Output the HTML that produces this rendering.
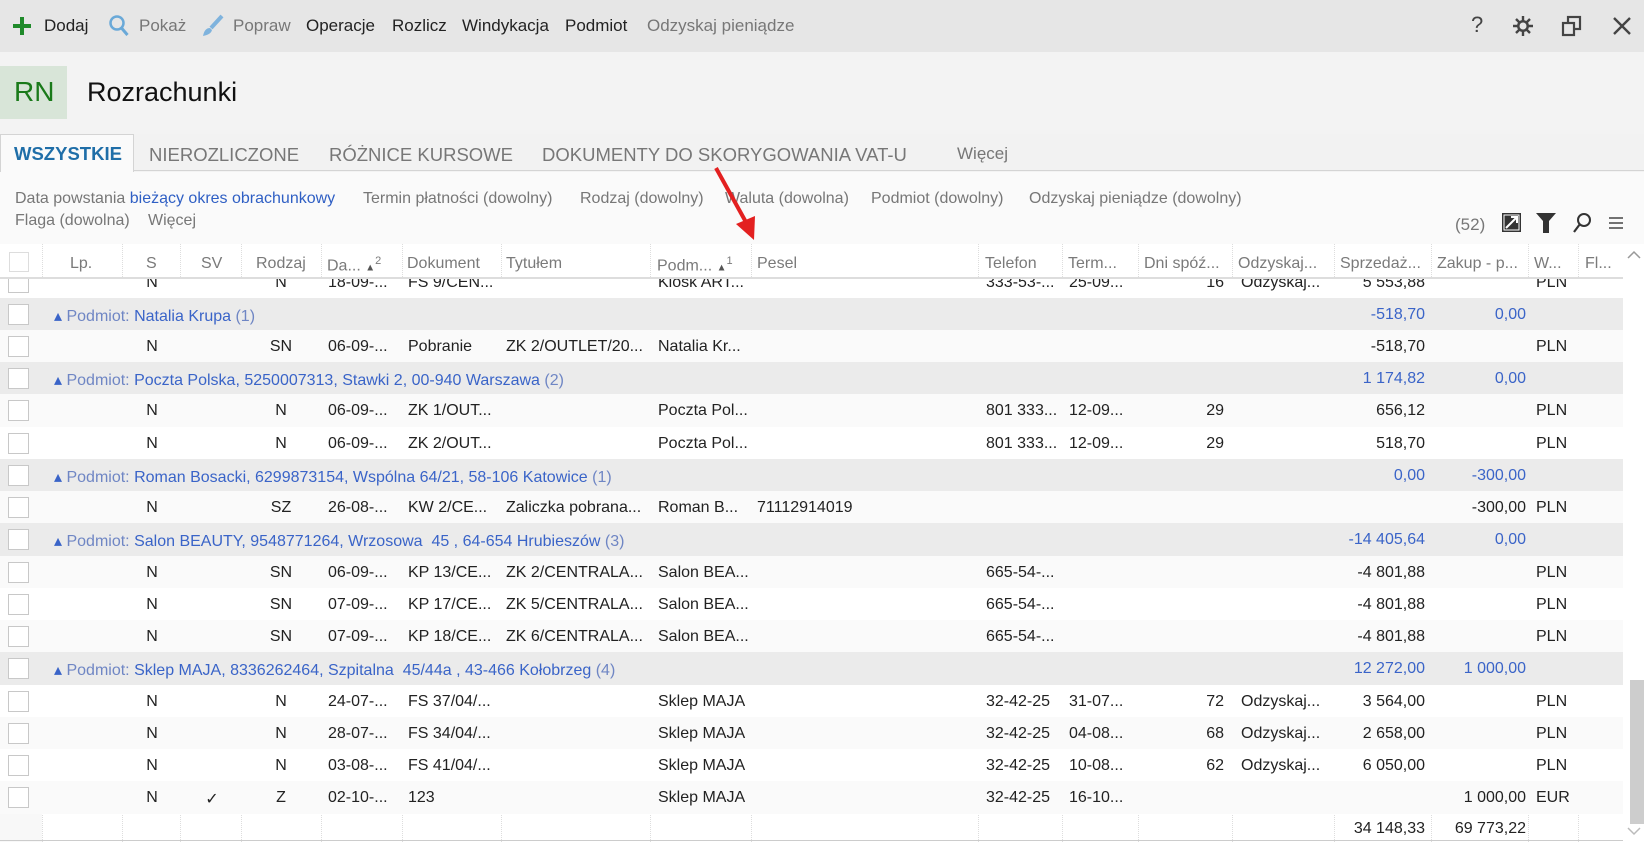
<!DOCTYPE html>
<html><head><meta charset="utf-8"><style>
*{margin:0;padding:0;box-sizing:border-box}
body{width:1644px;height:842px;overflow:hidden;background:#f3f3f3;font-family:"Liberation Sans",sans-serif;color:#222;position:relative}
.a{position:absolute;white-space:nowrap}
.tb{position:absolute;left:0;top:0;width:1644px;height:52px;background:#e6e6e6}
.tb .a{top:16px;font-size:17px}
.g{color:#777}
.row{position:absolute;left:0;width:1623px;height:33px;font-size:16px}
.row .a{top:8px}
.r{text-align:right}
.c{text-align:center}
.cb{position:absolute;left:8px;top:6px;width:21px;height:21px;border:1px solid #c8c8c8;background:#fff}
.grp{background:#ebebeb}
.grp .t{color:#3a64c8}
.sep{position:absolute;top:244px;height:598px;border-left:1px dotted #ddd}
.hd{position:absolute;top:255px;font-size:16px;color:#7a7a7a}
</style></head><body>
<div class="tb">
 <svg class="a" style="left:12px;top:16px" width="20" height="20"><path d="M10 1v18M1 10h18" stroke="#1f8a2a" stroke-width="4"/></svg>
 <div class="a" style="left:44px">Dodaj</div>
 <svg class="a" style="left:108px;top:14px" width="22" height="24"><circle cx="9" cy="9" r="6.5" fill="none" stroke="#6aa9d8" stroke-width="2.5"/><path d="M13.5 14l6 7" stroke="#6aa9d8" stroke-width="3"/></svg>
 <div class="a g" style="left:139px">Pokaż</div>
 <svg class="a" style="left:200px;top:14px" width="24" height="24"><path d="M22 2L11 14" stroke="#7fb3dd" stroke-width="4"/><path d="M10 14c-4 0-6 3-7 8 4-1 8-2 9-6z" fill="#7fb3dd"/></svg>
 <div class="a g" style="left:233px">Popraw</div>
 <div class="a" style="left:306px">Operacje</div>
 <div class="a" style="left:392px">Rozlicz</div>
 <div class="a" style="left:462px">Windykacja</div>
 <div class="a" style="left:565px">Podmiot</div>
 <div class="a g" style="left:647px">Odzyskaj pieniądze</div>
 <div class="a" style="left:1471px;top:12px;font-size:22px;color:#444">?</div>
 <svg class="a" style="left:1512px;top:15px" width="22" height="22" viewBox="0 0 22 22"><g stroke="#444" stroke-width="2.4"><path d="M11 1v20M1 11h20M4 4l14 14M18 4L4 18"/></g><circle cx="11" cy="11" r="6" fill="#444"/><circle cx="11" cy="11" r="3.5" fill="#e6e6e6"/></svg>
 <svg class="a" style="left:1561px;top:15px" width="22" height="22"><rect x="7" y="2" width="12" height="12" fill="none" stroke="#444" stroke-width="2.2"/><rect x="2" y="8" width="11" height="12" fill="#e6e6e6" stroke="#444" stroke-width="2.2"/></svg>
 <svg class="a" style="left:1612px;top:16px" width="20" height="20"><path d="M2 2l16 16M18 2L2 18" stroke="#444" stroke-width="2.4"/></svg>
</div>
<div class="a" style="left:0;top:66px;width:67px;height:53px;background:#d8e5d8"></div>
<div class="a" style="left:14px;top:76px;font-size:28px;color:#1a7a1a">RN</div>
<div class="a" style="left:87px;top:77px;font-size:27px;color:#111">Rozrachunki</div>
<div class="a" style="left:0;top:134px;width:1644px;height:37px;background:#f2f2f2;border-bottom:1px solid #d4d4d4"></div>
<div class="a" style="left:0;top:134px;width:134px;height:38px;background:#fafafa;border:1px solid #d4d4d4;border-bottom:none"></div>
<div class="a" style="left:14px;top:143px;font-size:18.5px;font-weight:bold;color:#1f6ea8">WSZYSTKIE</div>
<div class="a g" style="left:149px;top:144px;font-size:18.5px">NIEROZLICZONE</div>
<div class="a g" style="left:329px;top:144px;font-size:18.5px">RÓŻNICE KURSOWE</div>
<div class="a g" style="left:542px;top:144px;font-size:18.5px">DOKUMENTY DO SKORYGOWANIA VAT-U</div>
<div class="a g" style="left:957px;top:144px;font-size:17px">Więcej</div>
<div class="a" style="left:0;top:172px;width:1644px;height:72px;background:#fafafa"></div>
<div class="a g" style="left:15px;top:190px;font-size:16px">Data powstania <span style="color:#2f5fc4">bieżący okres obrachunkowy</span></div>
<div class="a g" style="left:363px;top:190px;font-size:16px">Termin płatności (dowolny)</div>
<div class="a g" style="left:580px;top:190px;font-size:16px">Rodzaj (dowolny)</div>
<div class="a g" style="left:725px;top:190px;font-size:16px">Waluta (dowolna)</div>
<div class="a g" style="left:871px;top:190px;font-size:16px">Podmiot (dowolny)</div>
<div class="a g" style="left:1029px;top:190px;font-size:16px">Odzyskaj pieniądze (dowolny)</div>
<div class="a g" style="left:15px;top:212px;font-size:16px">Flaga (dowolna)</div>
<div class="a g" style="left:148px;top:212px;font-size:16px">Więcej</div>
<div class="a g" style="left:1455px;top:215px;font-size:17px">(52)</div>
<svg class="a" style="left:1502px;top:213px" width="19" height="19"><rect width="19" height="19" fill="#333"/><rect x="2" y="2" width="15" height="15" fill="none" stroke="#fff" stroke-width="1"/><path d="M4 15L15 4M9 4h6v6" stroke="#fff" stroke-width="2" fill="none"/></svg>
<svg class="a" style="left:1536px;top:213px" width="20" height="20"><path d="M0 0h20l-7 8v12h-6V8z" fill="#333"/></svg>
<svg class="a" style="left:1572px;top:212px" width="20" height="22"><circle cx="12" cy="8" r="6" fill="none" stroke="#333" stroke-width="2"/><path d="M8 12l-6 8" stroke="#333" stroke-width="2.2"/></svg>
<svg class="a" style="left:1609px;top:217px" width="14" height="12"><path d="M0 1h14M0 6h14M0 11h14" stroke="#444" stroke-width="1.5"/></svg>
<!-- table -->
<div class="a" style="left:0;top:244px;width:1644px;height:598px;background:#fff"></div>
<div class="a" style="left:0;top:244px;width:42px;height:598px;background:#f8f8f8"></div>
<div class="sep" style="left:42px"></div><div class="sep" style="left:122px"></div><div class="sep" style="left:180px"></div><div class="sep" style="left:241px"></div><div class="sep" style="left:321px"></div><div class="sep" style="left:402px"></div><div class="sep" style="left:501px"></div><div class="sep" style="left:650px"></div><div class="sep" style="left:751px"></div><div class="sep" style="left:978px"></div><div class="sep" style="left:1062px"></div><div class="sep" style="left:1138px"></div><div class="sep" style="left:1232px"></div><div class="sep" style="left:1334px"></div><div class="sep" style="left:1431px"></div><div class="sep" style="left:1528px"></div><div class="sep" style="left:1578px"></div>
<div id="body" class="a" style="left:0;top:279px;width:1623px;height:563px;overflow:hidden">
<div style="position:absolute;left:0;top:-279px;width:1623px;height:842px">
<div class="row" style="top:266px;background:#fff"><div class="cb"></div><div class="a c" style="left:132px;width:40px">N</div><div class="a c" style="left:261px;width:40px">N</div><div class="a" style="left:328px">18-09-...</div><div class="a" style="left:408px">FS 9/CEN...</div><div class="a" style="left:658px">Kiosk ART...</div><div class="a" style="left:986px">333-53-...</div><div class="a" style="left:1069px">25-09...</div><div class="a r" style="right:399px">16</div><div class="a" style="left:1241px">Odzyskaj...</div><div class="a r" style="right:198px">5 553,88</div><div class="a" style="left:1536px">PLN</div></div>

<div class="row grp" style="top:298px"><div class="cb"></div><div class="a t" style="left:54px">▴ <span style="color:#6f86c4">Podmiot:</span> Natalia Krupa <span style="color:#6f86c4">(1)</span></div><div class="a r t" style="right:198px">-518,70</div><div class="a r t" style="right:97px">0,00</div></div>
<div class="row" style="top:330px;background:#fafafa"><div class="cb"></div><div class="a c" style="left:132px;width:40px">N</div><div class="a c" style="left:261px;width:40px">SN</div><div class="a" style="left:328px">06-09-...</div><div class="a" style="left:408px">Pobranie</div><div class="a" style="left:506px">ZK 2/OUTLET/20...</div><div class="a" style="left:658px">Natalia Kr...</div><div class="a r" style="right:198px">-518,70</div><div class="a" style="left:1536px">PLN</div></div>

<div class="row grp" style="top:362px"><div class="cb"></div><div class="a t" style="left:54px">▴ <span style="color:#6f86c4">Podmiot:</span> Poczta Polska, 5250007313, Stawki 2, 00-940 Warszawa <span style="color:#6f86c4">(2)</span></div><div class="a r t" style="right:198px">1 174,82</div><div class="a r t" style="right:97px">0,00</div></div>
<div class="row" style="top:394px;background:#fafafa"><div class="cb"></div><div class="a c" style="left:132px;width:40px">N</div><div class="a c" style="left:261px;width:40px">N</div><div class="a" style="left:328px">06-09-...</div><div class="a" style="left:408px">ZK 1/OUT...</div><div class="a" style="left:658px">Poczta Pol...</div><div class="a" style="left:986px">801 333...</div><div class="a" style="left:1069px">12-09...</div><div class="a r" style="right:399px">29</div><div class="a r" style="right:198px">656,12</div><div class="a" style="left:1536px">PLN</div></div>
<div class="row" style="top:427px;background:#fff"><div class="cb"></div><div class="a c" style="left:132px;width:40px">N</div><div class="a c" style="left:261px;width:40px">N</div><div class="a" style="left:328px">06-09-...</div><div class="a" style="left:408px">ZK 2/OUT...</div><div class="a" style="left:658px">Poczta Pol...</div><div class="a" style="left:986px">801 333...</div><div class="a" style="left:1069px">12-09...</div><div class="a r" style="right:399px">29</div><div class="a r" style="right:198px">518,70</div><div class="a" style="left:1536px">PLN</div></div>

<div class="row grp" style="top:459px"><div class="cb"></div><div class="a t" style="left:54px">▴ <span style="color:#6f86c4">Podmiot:</span> Roman Bosacki, 6299873154, Wspólna 64/21, 58-106 Katowice <span style="color:#6f86c4">(1)</span></div><div class="a r t" style="right:198px">0,00</div><div class="a r t" style="right:97px">-300,00</div></div>
<div class="row" style="top:491px;background:#fafafa"><div class="cb"></div><div class="a c" style="left:132px;width:40px">N</div><div class="a c" style="left:261px;width:40px">SZ</div><div class="a" style="left:328px">26-08-...</div><div class="a" style="left:408px">KW 2/CE...</div><div class="a" style="left:506px">Zaliczka pobrana...</div><div class="a" style="left:658px">Roman B...</div><div class="a" style="left:757px">71112914019</div><div class="a r" style="right:97px">-300,00</div><div class="a" style="left:1536px">PLN</div></div>

<div class="row grp" style="top:523px"><div class="cb"></div><div class="a t" style="left:54px">▴ <span style="color:#6f86c4">Podmiot:</span> Salon BEAUTY, 9548771264, Wrzosowa &nbsp;45 , 64-654 Hrubieszów <span style="color:#6f86c4">(3)</span></div><div class="a r t" style="right:198px">-14 405,64</div><div class="a r t" style="right:97px">0,00</div></div>
<div class="row" style="top:556px;background:#fafafa"><div class="cb"></div><div class="a c" style="left:132px;width:40px">N</div><div class="a c" style="left:261px;width:40px">SN</div><div class="a" style="left:328px">06-09-...</div><div class="a" style="left:408px">KP 13/CE...</div><div class="a" style="left:506px">ZK 2/CENTRALA...</div><div class="a" style="left:658px">Salon BEA...</div><div class="a" style="left:986px">665-54-...</div><div class="a r" style="right:198px">-4 801,88</div><div class="a" style="left:1536px">PLN</div></div>
<div class="row" style="top:588px;background:#fff"><div class="cb"></div><div class="a c" style="left:132px;width:40px">N</div><div class="a c" style="left:261px;width:40px">SN</div><div class="a" style="left:328px">07-09-...</div><div class="a" style="left:408px">KP 17/CE...</div><div class="a" style="left:506px">ZK 5/CENTRALA...</div><div class="a" style="left:658px">Salon BEA...</div><div class="a" style="left:986px">665-54-...</div><div class="a r" style="right:198px">-4 801,88</div><div class="a" style="left:1536px">PLN</div></div>
<div class="row" style="top:620px;background:#fafafa"><div class="cb"></div><div class="a c" style="left:132px;width:40px">N</div><div class="a c" style="left:261px;width:40px">SN</div><div class="a" style="left:328px">07-09-...</div><div class="a" style="left:408px">KP 18/CE...</div><div class="a" style="left:506px">ZK 6/CENTRALA...</div><div class="a" style="left:658px">Salon BEA...</div><div class="a" style="left:986px">665-54-...</div><div class="a r" style="right:198px">-4 801,88</div><div class="a" style="left:1536px">PLN</div></div>

<div class="row grp" style="top:652px"><div class="cb"></div><div class="a t" style="left:54px">▴ <span style="color:#6f86c4">Podmiot:</span> Sklep MAJA, 8336262464, Szpitalna &nbsp;45/44a , 43-466 Kołobrzeg <span style="color:#6f86c4">(4)</span></div><div class="a r t" style="right:198px">12 272,00</div><div class="a r t" style="right:97px">1 000,00</div></div>
<div class="row" style="top:685px;background:#fff"><div class="cb"></div><div class="a c" style="left:132px;width:40px">N</div><div class="a c" style="left:261px;width:40px">N</div><div class="a" style="left:328px">24-07-...</div><div class="a" style="left:408px">FS 37/04/...</div><div class="a" style="left:658px">Sklep MAJA</div><div class="a" style="left:986px">32-42-25</div><div class="a" style="left:1069px">31-07...</div><div class="a r" style="right:399px">72</div><div class="a" style="left:1241px">Odzyskaj...</div><div class="a r" style="right:198px">3 564,00</div><div class="a" style="left:1536px">PLN</div></div>
<div class="row" style="top:717px;background:#fafafa"><div class="cb"></div><div class="a c" style="left:132px;width:40px">N</div><div class="a c" style="left:261px;width:40px">N</div><div class="a" style="left:328px">28-07-...</div><div class="a" style="left:408px">FS 34/04/...</div><div class="a" style="left:658px">Sklep MAJA</div><div class="a" style="left:986px">32-42-25</div><div class="a" style="left:1069px">04-08...</div><div class="a r" style="right:399px">68</div><div class="a" style="left:1241px">Odzyskaj...</div><div class="a r" style="right:198px">2 658,00</div><div class="a" style="left:1536px">PLN</div></div>
<div class="row" style="top:749px;background:#fff"><div class="cb"></div><div class="a c" style="left:132px;width:40px">N</div><div class="a c" style="left:261px;width:40px">N</div><div class="a" style="left:328px">03-08-...</div><div class="a" style="left:408px">FS 41/04/...</div><div class="a" style="left:658px">Sklep MAJA</div><div class="a" style="left:986px">32-42-25</div><div class="a" style="left:1069px">10-08...</div><div class="a r" style="right:399px">62</div><div class="a" style="left:1241px">Odzyskaj...</div><div class="a r" style="right:198px">6 050,00</div><div class="a" style="left:1536px">PLN</div></div>
<div class="row" style="top:781px;background:#fafafa"><div class="cb"></div><div class="a c" style="left:132px;width:40px">N</div><div class="a c" style="left:192px;width:40px">✓</div><div class="a c" style="left:261px;width:40px">Z</div><div class="a" style="left:328px">02-10-...</div><div class="a" style="left:408px">123</div><div class="a" style="left:658px">Sklep MAJA</div><div class="a" style="left:986px">32-42-25</div><div class="a" style="left:1069px">16-10...</div><div class="a r" style="right:97px">1 000,00</div><div class="a" style="left:1536px">EUR</div></div>
<div class="row" style="top:813px;border-bottom:1px solid #ccc;height:28px"><div class="a r" style="right:198px;top:7px">34 148,33</div><div class="a r" style="right:97px;top:7px">69 773,22</div></div>
</div></div>
<!-- header -->
<div class="a" style="left:0;top:244px;width:1623px;height:35px;background:#fff;border-bottom:2px solid #ddd"></div>
<div class="a" style="left:9px;top:252px;width:20px;height:20px;border:1px solid #ddd;background:#fff"></div>
<div class="sep" style="left:42px;height:35px"></div><div class="sep" style="left:122px;height:35px"></div><div class="sep" style="left:180px;height:35px"></div><div class="sep" style="left:241px;height:35px"></div><div class="sep" style="left:321px;height:35px"></div><div class="sep" style="left:402px;height:35px"></div><div class="sep" style="left:501px;height:35px"></div><div class="sep" style="left:650px;height:35px"></div><div class="sep" style="left:751px;height:35px"></div><div class="sep" style="left:978px;height:35px"></div><div class="sep" style="left:1062px;height:35px"></div><div class="sep" style="left:1138px;height:35px"></div><div class="sep" style="left:1232px;height:35px"></div><div class="sep" style="left:1334px;height:35px"></div><div class="sep" style="left:1431px;height:35px"></div><div class="sep" style="left:1528px;height:35px"></div><div class="sep" style="left:1578px;height:35px"></div>
<div class="hd" style="left:70px">Lp.</div>
<div class="hd" style="left:146px">S</div>
<div class="hd" style="left:201px">SV</div>
<div class="hd" style="left:256px">Rodzaj</div>
<div class="hd" style="left:327px">Da... <span style="font-size:10px;color:#555">▲</span><sup style="font-size:11px">2</sup></div>
<div class="hd" style="left:407px">Dokument</div>
<div class="hd" style="left:506px">Tytułem</div>
<div class="hd" style="left:657px">Podm... <span style="font-size:10px;color:#555">▲</span><sup style="font-size:11px">1</sup></div>
<div class="hd" style="left:757px">Pesel</div>
<div class="hd" style="left:985px">Telefon</div>
<div class="hd" style="left:1068px">Term...</div>
<div class="hd" style="left:1144px">Dni spóź...</div>
<div class="hd" style="left:1238px">Odzyskaj...</div>
<div class="hd" style="left:1340px">Sprzedaż...</div>
<div class="hd" style="left:1437px">Zakup - p...</div>
<div class="hd" style="left:1534px">W...</div>
<div class="hd" style="left:1585px">Fl...</div>
<!-- scrollbar -->
<div class="a" style="left:1623px;top:244px;width:21px;height:598px;background:#fff"></div>
<svg class="a" style="left:1627px;top:250px" width="14" height="10"><path d="M1 8l6-6 6 6" stroke="#999" stroke-width="1.5" fill="none"/></svg>
<div class="a" style="left:1630px;top:680px;width:14px;height:144px;background:#cdcdcd"></div>
<svg class="a" style="left:1627px;top:826px" width="14" height="10"><path d="M1 2l6 6 6-6" stroke="#bbb" stroke-width="1.5" fill="none"/></svg>
<!-- red arrow -->
<svg class="a" style="left:700px;top:160px" width="70" height="90"><path d="M16 8L47 64" stroke="#e32020" stroke-width="4"/><path d="M36 64L55 56L54 80z" fill="#e32020"/></svg>
</body></html>
